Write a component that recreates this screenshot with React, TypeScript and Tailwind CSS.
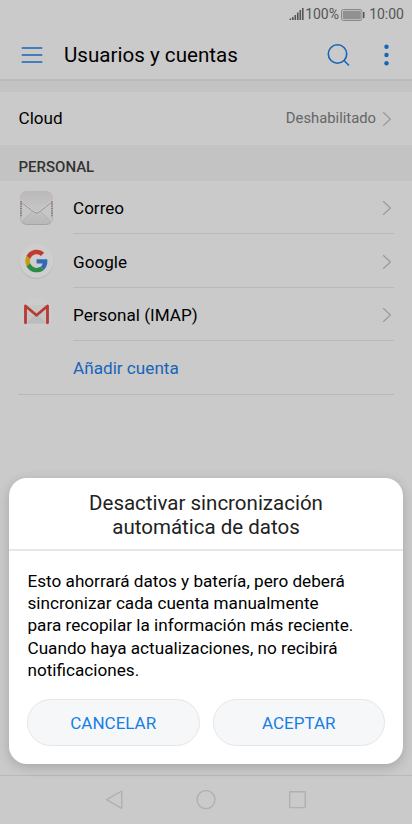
import React from "react";

type AccountRowProps = {
  label: string;
  icon: React.ReactNode;
};

const Chevron = () => (
  <svg width="10" height="16" viewBox="0 0 10 16" fill="none" stroke="#999999" strokeWidth="1.2">
    <path d="M1.200 1.200l7.200 6.800-7.200 6.800" />
  </svg>
);

const MailIcon = () => (
  <svg width="36" height="38" viewBox="0 0 36 38">
    <defs>
      <linearGradient id="mailBody" x1="0" y1="0" x2="0" y2="1">
        <stop offset="0" stopColor="#b9b9b9" />
        <stop offset="0.5" stopColor="#c4c4c4" />
        <stop offset="1" stopColor="#b8b8b8" />
      </linearGradient>
    </defs>
    <rect x="2" y="2.500" width="33" height="33.500" rx="7" fill="#a4a4a4" />
    <rect x="2" y="2" width="33" height="33" rx="7" fill="url(#mailBody)" />
    <path d="M2.500 12.500L14 22.500 3 33zM34.500 12.500L23 22.500 34 33z" fill="#c6c6c6" />
    <path d="M2.500 12.500l13.500 10.500q2.500 2 5 0L34.500 12.500" fill="none" stroke="#8f8f8f" strokeWidth="1" />
    <path d="M2.500 11.500l13.500 10.500q2.500 2 5 0L34.500 11.500" fill="none" stroke="#d6d6d6" strokeWidth="0.8" />
    <path d="M4 32.500l10.500-10M33 32.500l-10.500-10" stroke="#aaaaaa" strokeWidth="0.6" />
    <path d="M3 12v16M34 12v16" stroke="#bf6560" strokeWidth="1.600" strokeDasharray="1.500 3" />
    <path d="M3 14.200v14M34 14.200v14" stroke="#5279a8" strokeWidth="1.600" strokeDasharray="1.500 3" />
  </svg>
);

const GoogleIcon = () => (
  <svg width="36" height="38" viewBox="0 0 36 38">
    <circle cx="18.500" cy="19.700" r="17" fill="#b0b0b0" />
    <circle cx="18.500" cy="19" r="17" fill="#cecece" />
    <g transform="translate(7.300 7.800) scale(0.47)">
      <path fill="#3569b8" d="M46.980 24.550c0-1.570-.15-3.090-.38-4.550H24v9.020h12.940c-.58 2.960-2.260 5.480-4.780 7.180l7.730 6c4.510-4.180 7.090-10.360 7.090-17.650z" />
      <path fill="#c03a2f" d="M24 9.500c3.540 0 6.710 1.220 9.210 3.600l6.850-6.850C35.900 2.380 30.470 0 24 0 14.620 0 6.510 5.380 2.560 13.220l7.980 6.190C12.430 13.720 17.740 9.500 24 9.500z" />
      <path fill="#ca9a0c" d="M10.530 28.590c-.48-1.450-.76-2.990-.76-4.590s.27-3.140.76-4.590l-7.980-6.190C.92 16.460 0 20.120 0 24c0 3.880.92 7.540 2.560 10.780l7.970-6.190z" />
      <path fill="#2d8b47" d="M24 48c6.480 0 11.930-2.130 15.890-5.810l-7.730-6c-2.150 1.450-4.920 2.300-8.160 2.300-6.260 0-11.570-4.220-13.470-9.910l-7.980 6.190C6.510 42.620 14.620 48 24 48z" />
    </g>
  </svg>
);

const GmailIcon = () => (
  <svg width="36" height="38" viewBox="0 0 36 38">
    <circle cx="18.500" cy="19" r="17" fill="#cccccc" />
    <path d="M6.500 10h24v18.500h-24z" fill="#c6c6c6" />
    <path d="M7.500 28.500l11-10 11 10z" fill="#bcbcbc" />
    <path d="M7.500 27.800V11L18.500 20.200 29.500 11v16.800" fill="none" stroke="#b83a32" strokeWidth="2.800" strokeLinejoin="round" strokeLinecap="round" />
  </svg>
);

const AccountRow = ({ label, icon }: AccountRowProps) => (
  <div className="flex h-[53.4px] items-stretch pl-[18px]">
    <div className="flex w-[55px] items-center">{icon}</div>
    <div className="mr-[18px] flex flex-1 items-center justify-between border-b border-[#b9b9b9] pr-[2px] pt-[2px]">
      <span className="text-[17.100px] leading-5">{label}</span>
      <Chevron />
    </div>
  </div>
);

const StatusBar = () => (
  <div className="flex h-7 items-center justify-end pr-[8px] pt-px text-[14px] text-[#555555]">
    <svg width="15" height="13" viewBox="0 0 15 13" fill="#555555">
      <path d="M.5 10.500h1.600V12H.5zM3 9h1.600v3H3zM5.500 7h1.600v5H5.500zM8 4.500h1.600V12H8zM10.500 2h1.600v10h-1.600zM13 0h1.600v12H13z" />
    </svg>
    <span className="ml-px w-[33px] whitespace-nowrap">100%</span>
    <svg className="ml-[3px]" width="24" height="12" viewBox="0 0 24 12">
      <rect x=".5" y=".5" width="20.500" height="11" rx="2" fill="none" stroke="#888888" />
      <rect x="1.800" y="1.800" width="18" height="8.400" rx="1" fill="#909090" />
      <rect x="22" y="3" width="1.500" height="6" fill="#555555" />
    </svg>
    <span className="ml-1 whitespace-nowrap">10:00</span>
  </div>
);

const Header = () => (
  <div className="flex h-[53px] items-center border-b-2 border-[#bbbbbb] pl-[21px] pr-[23px] pt-[2px]">
    <svg width="22" height="18" viewBox="0 0 22 18" stroke="#1764b9" strokeWidth="1.700">
      <path d="M.7 2h20.600M.7 9h20.600M.7 16h20.600" />
    </svg>
    <h1 className="ml-[21px] flex-1 pt-px text-[20.600px] leading-6">Usuarios y cuentas</h1>
    <svg width="24" height="24" viewBox="0 0 24 24" fill="none" stroke="#1764b9" strokeWidth="1.600">
      <circle cx="11.500" cy="11" r="9.200" />
      <path d="M17.800 17.300l5.200 5.200" />
    </svg>
    <svg className="ml-[34px]" width="5" height="22" viewBox="0 0 5 22" fill="#1764b9">
      <circle cx="2.500" cy="2.700" r="2.200" />
      <circle cx="2.500" cy="11" r="2.200" />
      <circle cx="2.500" cy="19.300" r="2.200" />
    </svg>
  </div>
);

const NavBar = () => (
  <div className="mt-auto flex h-[49px] items-center justify-center gap-[71px] border-t border-[#b9b9b9]">
    <svg width="20" height="20" viewBox="0 0 20 20" fill="none" stroke="#b0b0b0" strokeWidth="1.400" strokeLinejoin="round">
      <path d="M16.800 1v17.300L1.500 9.600z" />
    </svg>
    <svg width="20" height="20" viewBox="0 0 20 20" fill="none" stroke="#b0b0b0" strokeWidth="1.400">
      <circle cx="10" cy="9.600" r="9" />
    </svg>
    <svg width="20" height="20" viewBox="0 0 20 20" fill="none" stroke="#b0b0b0" strokeWidth="1.400">
      <rect x="2.700" y="1.800" width="15.600" height="15.800" rx=".5" />
    </svg>
  </div>
);

const SyncDialog = () => (
  <div className="absolute inset-x-[9px] top-[478px] flex h-[286px] flex-col rounded-[18px] bg-white shadow-[0_3px_12px_rgba(0,0,0,0.18)]">
    <h2 className="h-[73px] border-b-2 border-[#e6e6e6] pt-[13px] text-center text-[20.500px] leading-6 text-[#222222]">
      Desactivar sincronización
      <br />
      automática de datos
    </h2>
    <p className="mt-[19px] whitespace-nowrap pl-[18.500px] text-[17.150px] leading-[22.200px]">
      Esto ahorrará datos y batería, pero deberá
      <br />
      sincronizar cada cuenta manualmente
      <br />
      para recopilar la información más reciente.
      <br />
      Cuando haya actualizaciones, no recibirá
      <br />
      notificaciones.
    </p>
    <div className="mb-[18px] mt-auto flex gap-[13px] px-[18px] text-[17px] text-[#167ee6]">
      <button className="h-[47px] flex-1 rounded-full border border-[#e6e6e6] bg-[#f6f7f8] pt-[2px]">CANCELAR</button>
      <button className="h-[47px] flex-1 rounded-full border border-[#e6e6e6] bg-[#f6f7f8] pt-[2px]">ACEPTAR</button>
    </div>
  </div>
);

const App = () => {
  return (
    <div className="relative flex h-[824px] w-[412px] flex-col overflow-hidden bg-[#cacaca] font-['Roboto',sans-serif] text-black">
      <StatusBar />
      <Header />
      <div className="h-[11px] bg-[#c3c3c3]" />
      <div className="flex h-[53px] items-center pl-[18.500px] pr-[20px]">
        <span className="flex-1 text-[17.100px]">Cloud</span>
        <span className="mr-[6px] text-[14.800px] text-[#666666]">Deshabilitado</span>
        <Chevron />
      </div>
      <div className="flex h-9 items-center bg-[#c3c3c3] pl-[18.500px] pt-[9px] text-[15px] font-medium text-[#333333]">PERSONAL</div>
      <AccountRow label="Correo" icon={<MailIcon />} />
      <AccountRow label="Google" icon={<GoogleIcon />} />
      <AccountRow label="Personal (IMAP)" icon={<GmailIcon />} />
      <div className="mx-[18px] flex h-[53.4px] items-center border-b border-[#b9b9b9] pl-[55px] pt-[2px] text-[17.150px] text-[#1764b9]">
        Añadir cuenta
      </div>
      <NavBar />
      <SyncDialog />
    </div>
  );
};

export default App;
